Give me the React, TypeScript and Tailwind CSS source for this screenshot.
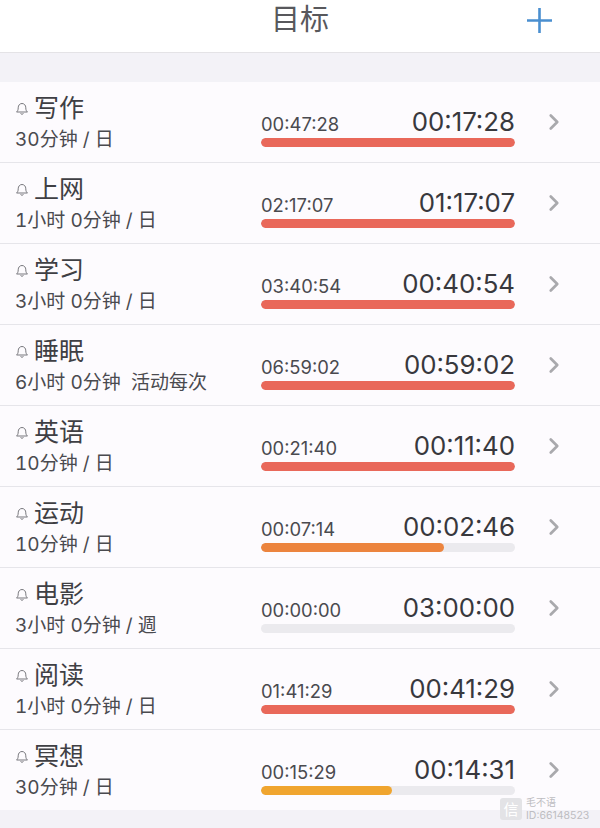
import { ChevronRight } from "lucide-react"

const fontStack = 'font-["Inter","Noto_Sans_CJK_SC",sans-serif]'

type Goal = {
  name: string
  target: string
  total: string
  left: string
  color: string
  percent: number
}

const goals: Goal[] = [
  { name: "写作", target: "30分钟 / 日", total: "00:47:28", left: "00:17:28", color: "bg-[#e9685a]", percent: 100 },
  { name: "上网", target: "1小时 0分钟 / 日", total: "02:17:07", left: "01:17:07", color: "bg-[#e9685a]", percent: 100 },
  { name: "学习", target: "3小时 0分钟 / 日", total: "03:40:54", left: "00:40:54", color: "bg-[#e9685a]", percent: 100 },
  { name: "睡眠", target: "6小时 0分钟\u00a0 活动每次", total: "06:59:02", left: "00:59:02", color: "bg-[#e9685a]", percent: 100 },
  { name: "英语", target: "10分钟 / 日", total: "00:21:40", left: "00:11:40", color: "bg-[#e9685a]", percent: 100 },
  { name: "运动", target: "10分钟 / 日", total: "00:07:14", left: "00:02:46", color: "bg-[#ec843e]", percent: 72 },
  { name: "电影", target: "3小时 0分钟 / 週", total: "00:00:00", left: "03:00:00", color: "bg-[#e9685a]", percent: 0 },
  { name: "阅读", target: "1小时 0分钟 / 日", total: "01:41:29", left: "00:41:29", color: "bg-[#e9685a]", percent: 100 },
  { name: "冥想", target: "30分钟 / 日", total: "00:15:29", left: "00:14:31", color: "bg-[#f0a52f]", percent: 51.5 },
]

function Bell() {
  return (
    <svg width="14" height="15" viewBox="0 0 14 15" fill="none" stroke="#77777c" strokeWidth="1" strokeLinejoin="round">
      <path d="M1.5 11c1.2-1 1.7-2 1.7-4.2C3.200 4.300 4.800 2.500 7 2.500s3.800 1.800 3.800 4.300c0 2.200.5 3.200 1.700 4.200z" />
      <path d="M5.700 12.200c.3.800.8 1.200 1.300 1.200s1-.4 1.300-1.200" />
    </svg>
  )
}

function GoalRow({ goal, last }: { goal: Goal; last: boolean }) {
  return (
    <div className={`flex pl-[15px] ${last ? "h-[80px]" : "h-[81px] border-b border-[#e6e5ea]"}`}>
      <div className="w-[246px] shrink-0 pt-[9px]">
        <div className="flex h-[34px] items-center gap-[5px]">
          <Bell />
          <span className="text-[25px] leading-[34px] text-[#3f3f44]">{goal.name}</span>
        </div>
        <div className="mt-[2px] whitespace-nowrap text-[19px] leading-[26px] tabular-nums text-[#4a4a4f]">{goal.target}</div>
      </div>
      <div className="w-[254px] shrink-0 pt-[17px]">
        <div className="flex h-[36px] items-end justify-between">
          <span className="text-[18.4px] leading-[22px] text-[#4a4a4f]">{goal.total}</span>
          <span className="text-[25.8px] leading-[26px] text-[#38383d]">{goal.left}</span>
        </div>
        <div className="mt-[3px] h-[8.5px] overflow-hidden rounded-full bg-[#ebeaee]">
          <div className={`h-full rounded-full ${goal.color}`} style={{ width: `${goal.percent}%` }} />
        </div>
      </div>
      <div className="flex flex-1 justify-end pr-[33px] pt-[27px]">
        <ChevronRight size={26} strokeWidth={2.5} className="text-[#a9a9ad]" />
      </div>
    </div>
  )
}

export default function App() {
  return (
    <div className={`relative flex h-[828px] w-[600px] flex-col overflow-hidden bg-[#f3f2f7] ${fontStack}`}>
      <header className="relative flex h-[53px] shrink-0 items-start justify-center border-b border-[#e4e3e6] bg-white">
        <h1 className="text-[29px] font-normal leading-[40px] text-[#58585c]">目标</h1>
        <svg className="absolute left-[526px] top-[7px]" width="27" height="27" viewBox="0 0 27 27" stroke="#4a8fd0" strokeWidth="2.600">
          <path d="M13.500 1v25M1 13.500h25" />
        </svg>
      </header>
      <div className="mt-[29px] bg-[#fdfbfe]">
        {goals.map((goal, i) => (
          <GoalRow key={goal.name} goal={goal} last={i === goals.length - 1} />
        ))}
      </div>

      {/* Watermark */}
      <div className="absolute left-[500px] top-[796px] flex items-center gap-[4px] text-[#bdbdc1]">
        <div className="flex h-[22px] w-[22px] items-center justify-center rounded-[3px] bg-[#e3e3e6] text-[15px] leading-none text-white">
          信
        </div>
        <div className="text-[10px] leading-[13px]">
          <div>毛不语</div>
          <div className="text-[10.500px]">ID:66148523</div>
        </div>
      </div>
    </div>
  )
}
